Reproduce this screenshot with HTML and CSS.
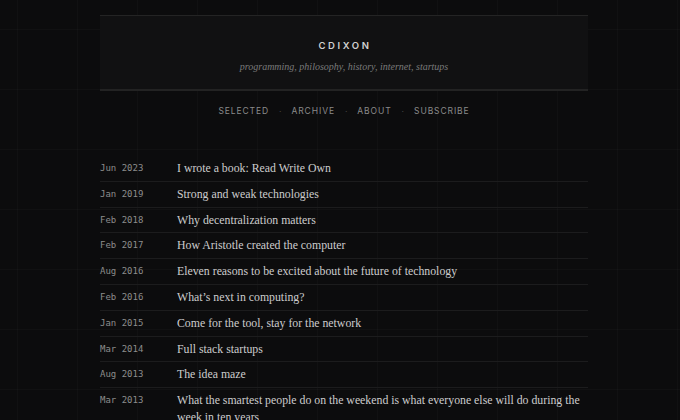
FILE: index.html
```html
<!DOCTYPE html>
<html lang="en">
<head>
  <meta charset="UTF-8">
  <meta name="viewport" content="width=device-width, initial-scale=1.0">
  <title>cdixon</title>
  <link rel="stylesheet" href="styles.css">
</head>
<body>
  <div class="page">
    <header class="masthead">
      <div class="site-title">CDIXON</div>
      <div class="tagline">programming, philosophy, history, internet, startups</div>
    </header>
    <nav class="nav">
      <a href="#">Selected</a>
      <span class="sep">·</span>
      <a href="#">Archive</a>
      <span class="sep">·</span>
      <a href="#">About</a>
      <span class="sep">·</span>
      <a href="#">Subscribe</a>
    </nav>
    <ul class="posts">
      <li><span class="date">Jun 2023</span><a href="#">I wrote a book: Read Write Own</a></li>
      <li><span class="date">Jan 2019</span><a href="#">Strong and weak technologies</a></li>
      <li><span class="date">Feb 2018</span><a href="#">Why decentralization matters</a></li>
      <li><span class="date">Feb 2017</span><a href="#">How Aristotle created the computer</a></li>
      <li><span class="date">Aug 2016</span><a href="#">Eleven reasons to be excited about the future of technology</a></li>
      <li><span class="date">Feb 2016</span><a href="#">What’s next in computing?</a></li>
      <li><span class="date">Jan 2015</span><a href="#">Come for the tool, stay for the network</a></li>
      <li><span class="date">Mar 2014</span><a href="#">Full stack startups</a></li>
      <li><span class="date">Aug 2013</span><a href="#">The idea maze</a></li>
      <li><span class="date">Mar 2013</span><a href="#">What the smartest people do on the weekend is what everyone else will do during the week in ten years</a></li>
    </ul>
  </div>
</body>
</html>
```

FILE: styles.css
```css
html, body { margin: 0; padding: 0; }
body {
  background-color: #0c0c0d;
  background-image:
    linear-gradient(rgba(255,255,255,0.018) 1px, transparent 1px),
    linear-gradient(90deg, rgba(255,255,255,0.018) 1px, transparent 1px);
  background-size: 60px 60px;
  background-position: 17px 29px;
  color: #c8c8c8;
  font-family: "Liberation Serif", serif;
  overflow: hidden;
}
a { color: inherit; text-decoration: none; }

.page { width: 488px; margin: 0 0 0 100px; padding-top: 15px; }

.masthead {
  background: #111112;
  border-top: 1px solid #242424;
  border-bottom: 2px solid #232323;
  height: 73px;
  display: flex;
  flex-direction: column;
  align-items: center;
}
.site-title {
  margin-top: 24px;
  font-family: Inter, sans-serif;
  font-weight: 600;
  font-size: 9.5px;
  letter-spacing: 2.6px;
  color: #d0d0d0;
  line-height: 12px;
  padding-left: 2px;
}
.tagline {
  margin-top: 9px;
  font-style: italic;
  font-size: 10px;
  color: #7a7a7a;
  line-height: 12px;
}

.nav {
  height: 40px;
  display: flex;
  align-items: center;
  justify-content: center;
  gap: 10px;
  font-family: Inter, sans-serif;
  font-size: 8.5px;
  letter-spacing: 0.9px;
  text-transform: uppercase;
  color: #8a8a8a;
}
.nav .sep { color: #444; letter-spacing: 0; }

.posts { list-style: none; margin: 25px 0 0; padding: 0; }
.posts li {
  display: flex;
  align-items: flex-start;
  border-bottom: 1px solid #1c1c1d;
  padding: 4px 0 3.8px;
  line-height: 17px;
}
.posts .date {
  flex: 0 0 77px;
  font-family: "DejaVu Sans Mono", monospace;
  font-size: 9px;
  color: #8c8c8c;
  line-height: 17px;
}
.posts a {
  font-size: 11.8px;
  color: #cdcdcd;
}
```
